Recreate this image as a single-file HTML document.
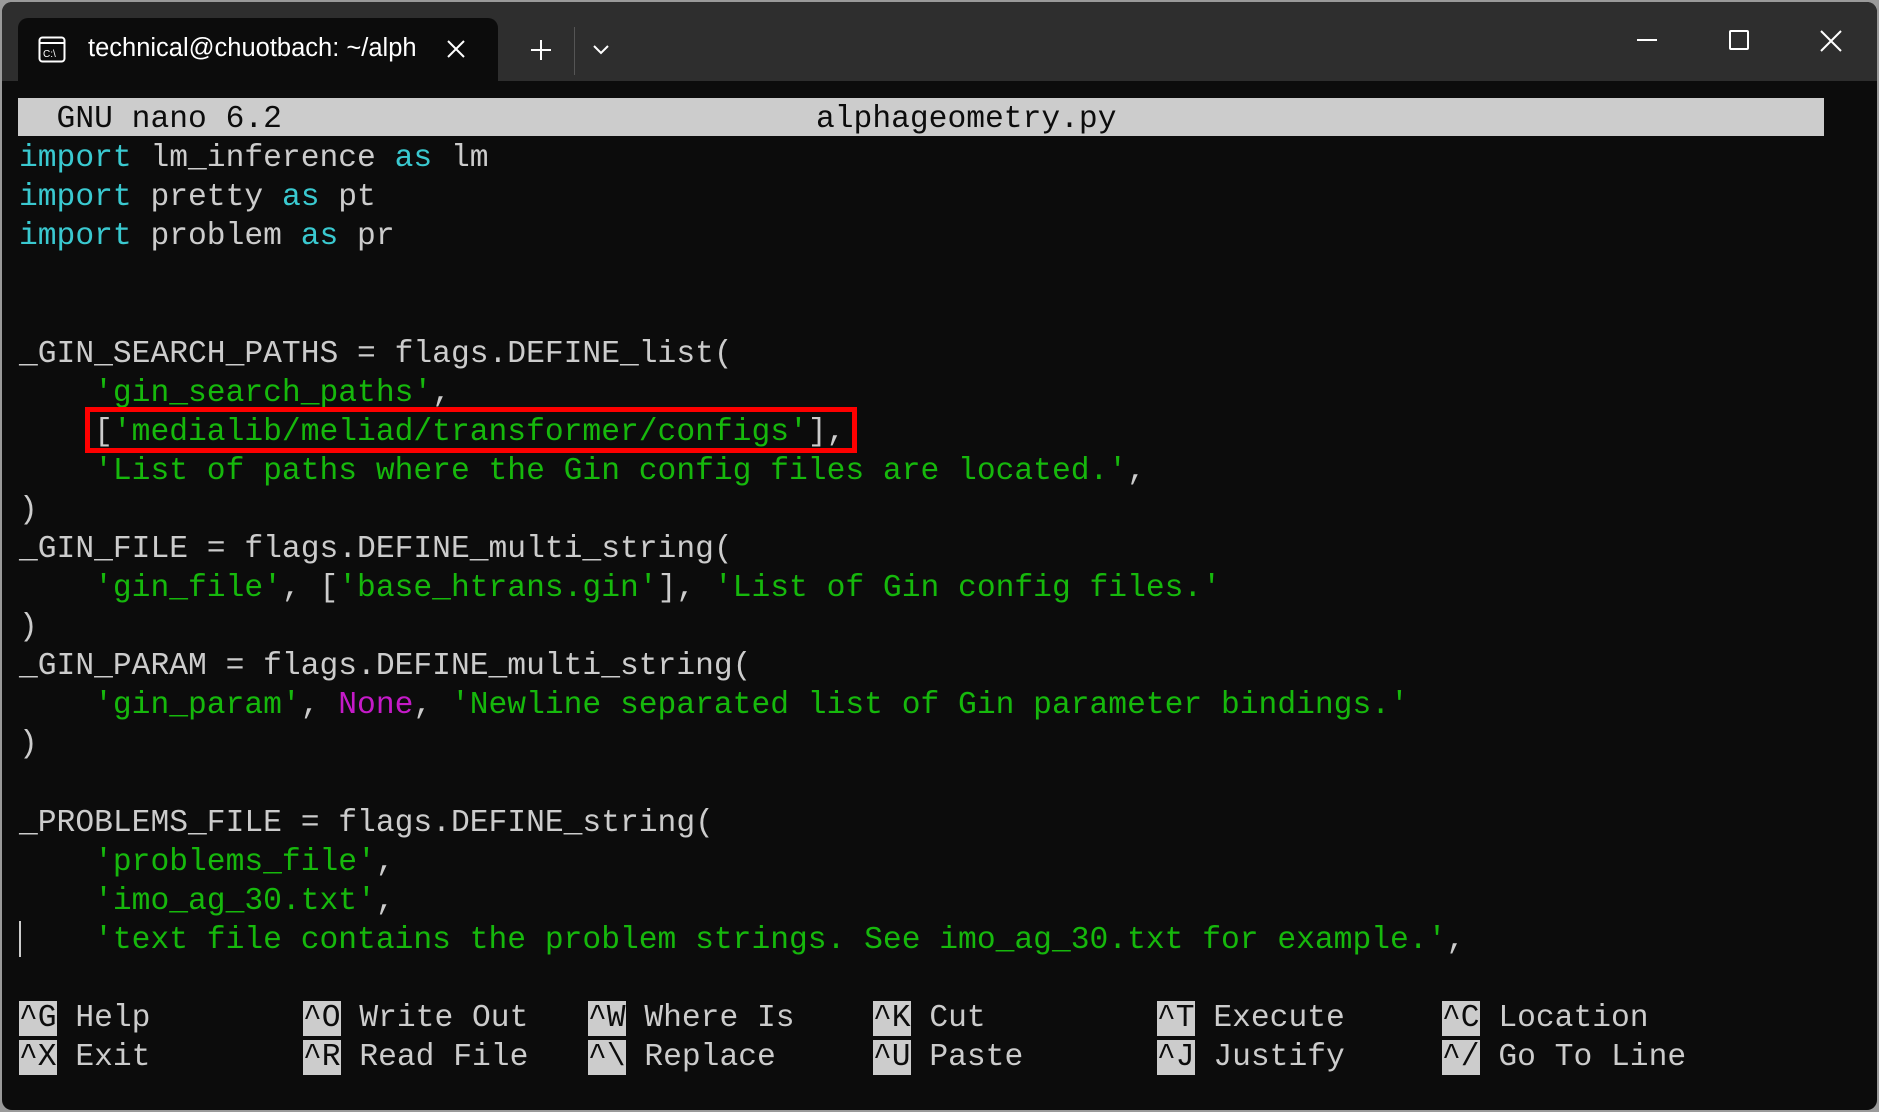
<!DOCTYPE html>
<html><head><meta charset="utf-8"><style>
html,body{margin:0;padding:0;width:1879px;height:1112px;overflow:hidden;background:#9a9a9a;}
.win{position:absolute;left:2px;top:2px;width:1875px;height:1108px;background:#0c0c0c;border-radius:10px;overflow:hidden;}
.title{position:absolute;left:0;top:0;width:100%;height:79px;background:#2e2e2e;}
.tab{position:absolute;left:16px;top:16px;width:480px;height:63px;background:#0c0c0c;border-radius:10px 10px 0 0;}
.tabtxt{position:absolute;left:86px;top:32px;color:#fff;font:25.5px "Liberation Sans",sans-serif;}
.t{position:absolute;font-family:"Liberation Mono",monospace;font-size:31.3px;line-height:39px;white-space:pre;color:#cccccc;left:17px;margin-top:2px;}
.k{color:#3ac9d0}.s{color:#16b80c}.m{color:#c51ac8}
.hdr{position:absolute;left:16px;top:96px;width:1806px;height:38px;background:#cccccc;}
.key{background:#cccccc;color:#0c0c0c;}
.red{position:absolute;left:83px;top:405px;width:762px;height:36px;border:5px solid #ff0000;}
</style></head><body><div class="win">
<div class="title"></div>
<div class="tab"></div>
<svg style="position:absolute;left:36px;top:34px" width="30" height="28" viewBox="0 0 30 28"><rect x="1.5" y="1.5" width="25" height="24" rx="3" fill="none" stroke="#fff" stroke-width="2"/><line x1="2" y1="7" x2="26" y2="7" stroke="#fff" stroke-width="2"/><text x="5" y="21" fill="#fff" font-size="10" font-family="Liberation Sans">C:\</text></svg>
<div class="tabtxt">technical@chuotbach: ~/alph</div>
<svg style="position:absolute;left:444px;top:37px" width="20" height="20"><path d="M2 2L18 18M18 2L2 18" stroke="#fff" stroke-width="2"/></svg>
<svg style="position:absolute;left:528px;top:37px" width="22" height="22"><path d="M11 1V21M1 11H21" stroke="#fff" stroke-width="2"/></svg>
<div style="position:absolute;left:572px;top:25px;width:1px;height:48px;background:#555"></div>
<svg style="position:absolute;left:591px;top:43px" width="16" height="10"><path d="M1 1L8 8L15 1" stroke="#fff" stroke-width="2" fill="none"/></svg>
<div style="position:absolute;left:1635px;top:37px;width:20px;height:2px;background:#fff"></div>
<div style="position:absolute;left:1727px;top:28px;width:16px;height:16px;border:2px solid #fff;border-radius:2px"></div>
<svg style="position:absolute;left:1818px;top:28px" width="22" height="22"><path d="M1 1L21 21M21 1L1 21" stroke="#fff" stroke-width="2"/></svg>
<div class="hdr"></div>
<div class="t" style="top:96px;color:#0c0c0c">  GNU nano 6.2</div>
<div class="t" style="top:96px;left:814px;color:#0c0c0c">alphageometry.py</div>
<div class="t" style="top:135px"><span class="k">import</span> lm_inference <span class="k">as</span> lm</div>
<div class="t" style="top:174px"><span class="k">import</span> pretty <span class="k">as</span> pt</div>
<div class="t" style="top:213px"><span class="k">import</span> problem <span class="k">as</span> pr</div>
<div class="t" style="top:331px">_GIN_SEARCH_PATHS = flags.DEFINE_list(</div>
<div class="t" style="top:370px">    <span class="s">'gin_search_paths'</span>,</div>
<div class="t" style="top:409px">    [<span class="s">'medialib/meliad/transformer/configs'</span>],</div>
<div class="t" style="top:448px">    <span class="s">'List of paths where the Gin config files are located.'</span>,</div>
<div class="t" style="top:487px">)</div>
<div class="t" style="top:526px">_GIN_FILE = flags.DEFINE_multi_string(</div>
<div class="t" style="top:565px">    <span class="s">'gin_file'</span>, [<span class="s">'base_htrans.gin'</span>], <span class="s">'List of Gin config files.'</span></div>
<div class="t" style="top:604px">)</div>
<div class="t" style="top:643px">_GIN_PARAM = flags.DEFINE_multi_string(</div>
<div class="t" style="top:682px">    <span class="s">'gin_param'</span>, <span class="m">None</span>, <span class="s">'Newline separated list of Gin parameter bindings.'</span></div>
<div class="t" style="top:721px">)</div>
<div class="t" style="top:800px">_PROBLEMS_FILE = flags.DEFINE_string(</div>
<div class="t" style="top:839px">    <span class="s">'problems_file'</span>,</div>
<div class="t" style="top:878px">    <span class="s">'imo_ag_30.txt'</span>,</div>
<div class="t" style="top:917px">    <span class="s">'text file contains the problem strings. See imo_ag_30.txt for example.'</span>,</div>
<div style="position:absolute;left:17px;top:919px;width:2px;height:36px;background:#ccc"></div>
<div class="red"></div>
<div class="t" style="top:995px;left:17px"><span class="key">^G</span> Help</div>
<div class="t" style="top:1034px;left:17px"><span class="key">^X</span> Exit</div>
<div class="t" style="top:995px;left:301px"><span class="key">^O</span> Write Out</div>
<div class="t" style="top:1034px;left:301px"><span class="key">^R</span> Read File</div>
<div class="t" style="top:995px;left:586px"><span class="key">^W</span> Where Is</div>
<div class="t" style="top:1034px;left:586px"><span class="key">^\</span> Replace</div>
<div class="t" style="top:995px;left:871px"><span class="key">^K</span> Cut</div>
<div class="t" style="top:1034px;left:871px"><span class="key">^U</span> Paste</div>
<div class="t" style="top:995px;left:1155px"><span class="key">^T</span> Execute</div>
<div class="t" style="top:1034px;left:1155px"><span class="key">^J</span> Justify</div>
<div class="t" style="top:995px;left:1440px"><span class="key">^C</span> Location</div>
<div class="t" style="top:1034px;left:1440px"><span class="key">^/</span> Go To Line</div>
</div></body></html>
